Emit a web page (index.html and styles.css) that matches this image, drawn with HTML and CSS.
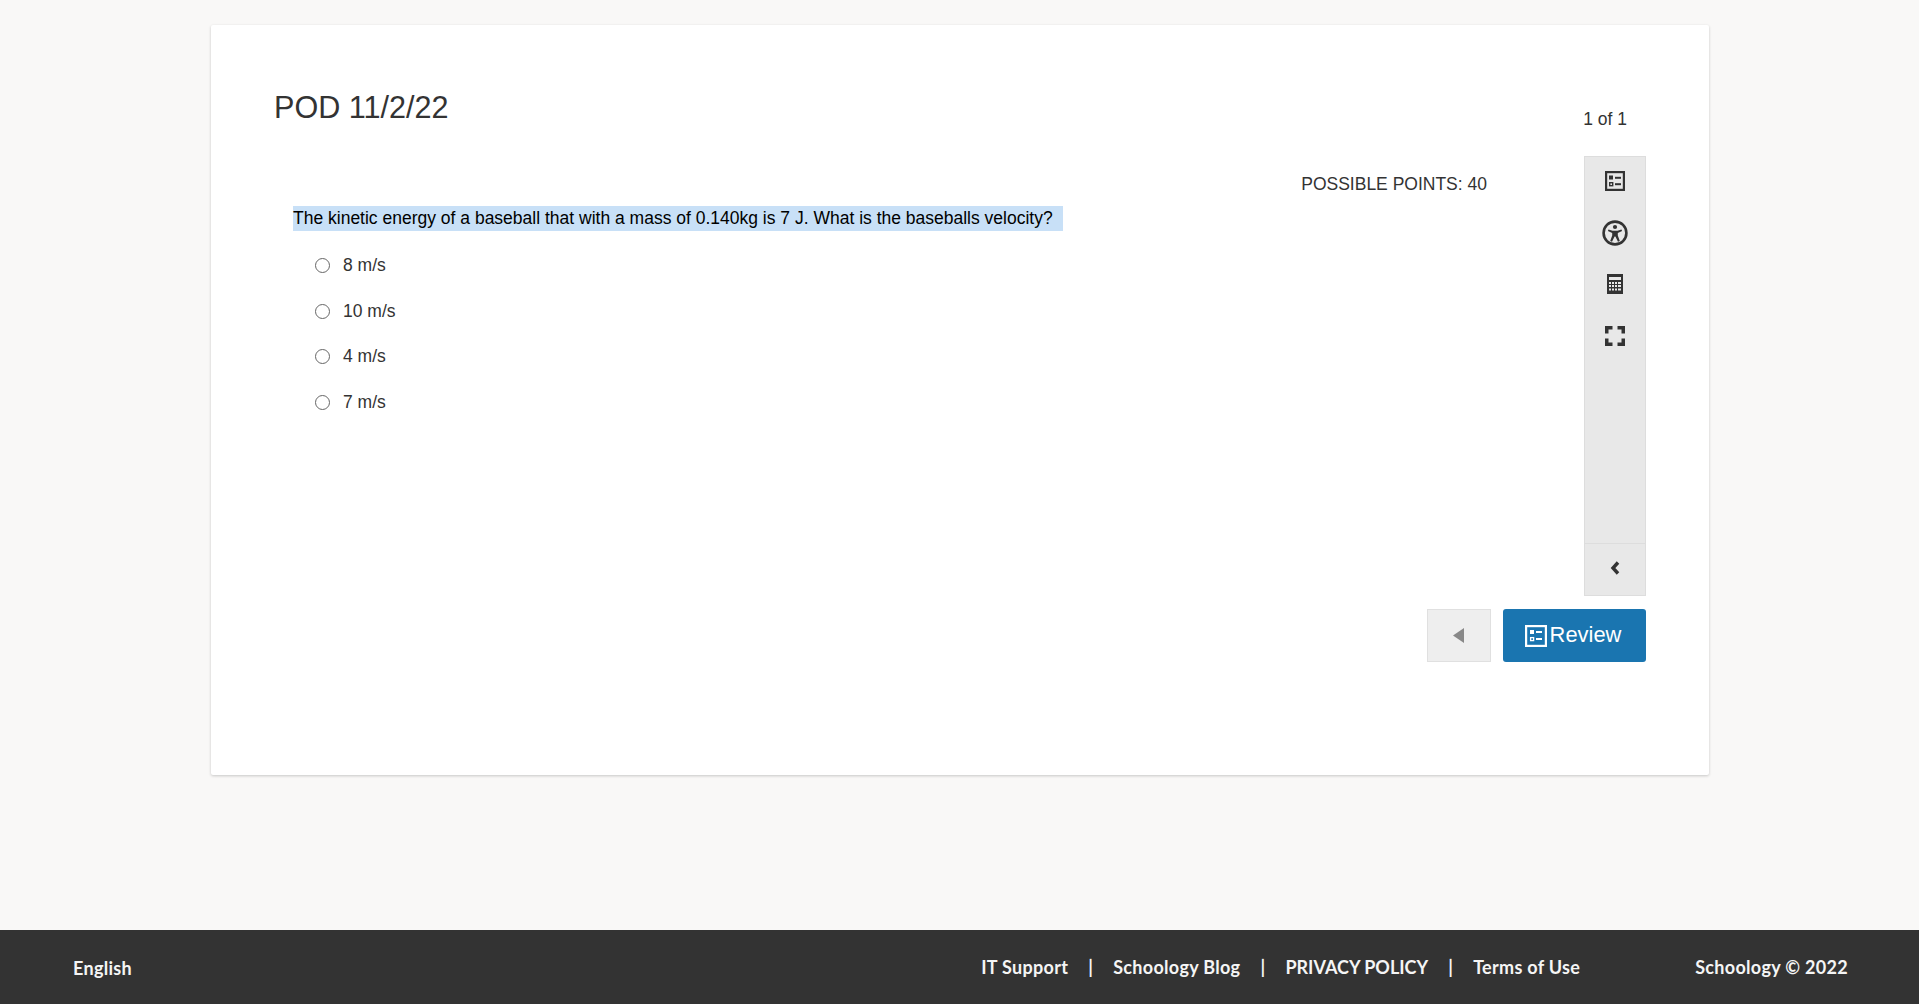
FILE: index.html
```html
<!DOCTYPE html>
<html lang="en">
<head>
<meta charset="utf-8">
<title>POD 11/2/22</title>
<link rel="stylesheet" href="styles.css">
</head>
<body>
<main class="card">
  <header class="head">
    <h1 class="title">POD 11/2/22</h1>
    <div class="pager">1 of 1</div>
  </header>
  <div class="work">
    <section class="question">
      <div class="points">POSSIBLE POINTS: 40</div>
      <p class="stem"><span class="stem-text">The kinetic energy of a baseball that with a mass of 0.140kg is 7 J. What is the baseballs velocity?</span></p>
      <div class="options">
        <label class="option"><input class="radio" type="radio" name="a"><span>8 m/s</span></label>
        <label class="option"><input class="radio" type="radio" name="a"><span>10 m/s</span></label>
        <label class="option"><input class="radio" type="radio" name="a"><span>4 m/s</span></label>
        <label class="option"><input class="radio" type="radio" name="a"><span>7 m/s</span></label>
      </div>
    </section>
    <aside class="tools">
      <div class="tool-list">
        <div class="tool">
          <svg width="20" height="20" viewBox="0 0 20 20"><rect x="1.1" y="1.1" width="17.8" height="17.8" fill="none" stroke="#333" stroke-width="2.2"/><rect x="4" y="4.5" width="4" height="4" fill="#333"/><rect x="4.7" y="11.7" width="3" height="3" fill="none" stroke="#333" stroke-width="1.4"/><rect x="10" y="5.8" width="6" height="2" fill="#333"/><rect x="10" y="12.2" width="6" height="2" fill="#333"/></svg>
        </div>
        <div class="tool">
          <svg width="26" height="26" viewBox="0 0 26 26"><circle cx="13" cy="13" r="11.4" fill="none" stroke="#333" stroke-width="2.6"/><circle cx="13" cy="7" r="2.1" fill="#333"/><path d="M6.5 9.4 L10.5 10.8 H15.5 L19.5 9.4 L20.1 11.1 L15.8 12.9 V15.4 L17.8 21 L16 21.7 L13.4 16.6 H12.6 L10 21.7 L8.2 21 L10.2 15.4 V12.9 L5.9 11.1 Z" fill="#333"/></svg>
        </div>
        <div class="tool">
          <svg width="16" height="20" viewBox="0 0 16 20"><rect width="16" height="20" fill="#333"/><rect x="2" y="3" width="12" height="3" fill="#e8e8e8"/><g fill="#e8e8e8"><rect x="2" y="8" width="2" height="2"/><rect x="5" y="8" width="2" height="2"/><rect x="8" y="8" width="2" height="2"/><rect x="11" y="8" width="3" height="2"/><rect x="2" y="11" width="2" height="2"/><rect x="5" y="11" width="2" height="2"/><rect x="8" y="11" width="2" height="2"/><rect x="11" y="11" width="3" height="2"/><rect x="2" y="14.5" width="2" height="2"/><rect x="5" y="14.5" width="2" height="2"/><rect x="8" y="14.5" width="2" height="2"/><rect x="11" y="14.5" width="3" height="2"/></g></svg>
        </div>
        <div class="tool">
          <svg width="20" height="20" viewBox="0 0 20 20"><path d="M0 7.5V0H7.5V3.5H3.5V7.5ZM12.5 0H20V7.5H16.5V3.5H12.5ZM0 12.5H3.5V16.5H7.5V20H0ZM16.5 12.5H20V20H12.5V16.5H16.5Z" fill="#333"/></svg>
        </div>
      </div>
      <div class="collapse">
        <svg width="10" height="14" viewBox="0 0 10 14"><path d="M8 1.5 L3 7 L8 12.5" fill="none" stroke="#333" stroke-width="3.4"/></svg>
      </div>
    </aside>
  </div>
  <nav class="actions">
    <button class="back" type="button" aria-label="Back"><svg width="11" height="15" viewBox="0 0 11 15"><path d="M11 0V15L0 7.5Z" fill="#888"/></svg></button>
    <button class="review" type="button">
      <svg width="22" height="22" viewBox="0 0 22 22"><rect x="1.1" y="1.1" width="19.8" height="19.8" fill="none" stroke="#fff" stroke-width="2.2"/><rect x="5" y="5" width="4" height="4" fill="#fff"/><rect x="5.6" y="12.6" width="3" height="3" fill="none" stroke="#fff" stroke-width="1.3"/><rect x="11" y="6" width="6" height="2" fill="#fff"/><rect x="11" y="13" width="6" height="2" fill="#fff"/></svg>
      <span class="review-label">Review</span>
    </button>
  </nav>
</main>
<footer class="foot">
  <span class="lang">English</span>
  <div class="links">
    <span>IT Support</span><span>|</span><span>Schoology Blog</span><span>|</span><span class="caps">PRIVACY POLICY</span><span>|</span><span>Terms of Use</span>
  </div>
  <span class="copy">Schoology © 2022</span>
</footer>
</body>
</html>
```
FILE: styles.css
```css
* { box-sizing: border-box; }
html, body { height: 100%; }
body {
  margin: 0;
  display: flex;
  flex-direction: column;
  background: #f9f8f7;
  font-family: "Liberation Sans", Arial, sans-serif;
  color: #333;
}
.card {
  width: 1498px;
  height: 750px;
  margin: 25px 0 0 211px;
  padding: 0 63px;
  background: #fff;
  border-radius: 2px;
  box-shadow: 0 1px 3px rgba(0, 0, 0, 0.2);
}
.head {
  display: flex;
  justify-content: space-between;
  height: 131px;
  padding: 66px 19px 27px 0;
}
.title {
  margin: 0;
  font-size: 30.6px;
  line-height: 33px;
  font-weight: 400;
}
.pager {
  align-self: flex-end;
  font-size: 17.5px;
  line-height: 20px;
}
.work {
  display: flex;
  height: 440px;
}
.question {
  flex: 1;
  padding: 18px 97px 0 19px;
}
.points {
  text-align: right;
  font-size: 17.5px;
  line-height: 20px;
}
.stem {
  margin: 12px 0 0;
  font-size: 17.5px;
  line-height: 25px;
}
.stem-text {
  display: inline-block;
  padding-right: 10px;
  background: #c8e0f7;
  color: #000;
}
.options {
  display: flex;
  flex-direction: column;
  gap: 23.5px;
  margin-top: 23.5px;
  padding-left: 22px;
}
.option {
  display: flex;
  align-items: center;
  gap: 13px;
  height: 22px;
  font-size: 17.5px;
}
.radio {
  appearance: none;
  width: 15px;
  height: 15px;
  margin: 0;
  background: #fff;
  border: 1px solid #666;
  border-radius: 50%;
}
.tools {
  display: flex;
  flex-direction: column;
  width: 62px;
  background: #e8e8e8;
  border: 1px solid #ddd;
}
.tool-list {
  display: flex;
  flex-direction: column;
  gap: 3.5px;
}
.tool {
  display: flex;
  align-items: center;
  justify-content: center;
  height: 48px;
}
.collapse {
  display: flex;
  align-items: center;
  justify-content: center;
  height: 52px;
  margin-top: auto;
  padding-bottom: 3px;
  border-top: 1px solid #ddd;
}
.actions {
  display: flex;
  justify-content: flex-end;
  gap: 12px;
  margin-top: 13px;
}
.back {
  display: flex;
  align-items: center;
  justify-content: center;
  width: 64px;
  height: 53px;
  padding: 0 1px 0 0;
  background: #eee;
  border: 1px solid #e0e0e0;
}
.review {
  display: flex;
  align-items: center;
  justify-content: center;
  gap: 3px;
  width: 143px;
  height: 53px;
  padding: 0 3px 0 0;
  background: #1a75b0;
  border: 0;
  border-radius: 3px;
  color: #fff;
  font-family: inherit;
  font-size: 21.9px;
}
.review-label { margin-bottom: 1px; }
.foot {
  display: flex;
  align-items: center;
  height: 74px;
  margin-top: auto;
  padding: 0 71px 0 73px;
  background: #333;
  color: #f5f5f5;
  font-family: "Lato", "Open Sans", sans-serif;
  font-size: 18px;
  font-weight: 700;
  letter-spacing: 0.3px;
}
.lang { margin-top: 2px; }
.links {
  display: flex;
  gap: 20px;
  margin-left: auto;
  margin-right: 115px;
}
.caps { letter-spacing: 0; }
```
